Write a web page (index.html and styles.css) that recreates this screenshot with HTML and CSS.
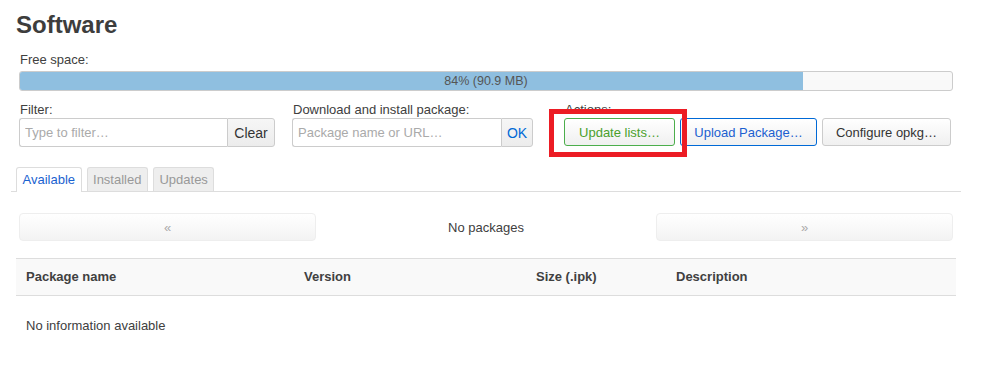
FILE: index.html
```html
<!DOCTYPE html>
<html>
<head>
<meta charset="utf-8">
<link rel="stylesheet" href="styles.css">
</head>
<body>
<div class="page">
  <h2 class="title">Software</h2>

  <div class="label free-label">Free space:</div>
  <div class="progress">
    <div class="progress-fill" style="width:84%"></div>
    <div class="progress-text">84% (90.9 MB)</div>
  </div>

  <div class="controls">
    <div class="group group-filter">
      <div class="label">Filter:</div>
      <div class="input-group">
        <input class="field field-filter" type="text" placeholder="Type to filter…">
        <button class="addon addon-clear">Clear</button>
      </div>
    </div>
    <div class="group group-download">
      <div class="label">Download and install package:</div>
      <div class="input-group">
        <input class="field field-download" type="text" placeholder="Package name or URL…">
        <button class="addon addon-ok">OK</button>
      </div>
    </div>
    <div class="group group-actions">
      <div class="label">Actions:</div>
      <div class="actions">
        <button class="btn btn-green">Update lists…</button>
        <button class="btn btn-blue">Upload Package…</button>
        <button class="btn btn-gray">Configure opkg…</button>
      </div>
    </div>
  </div>

  <ul class="tabs">
    <li class="tab tab-active">Available</li>
    <li class="tab">Installed</li>
    <li class="tab">Updates</li>
  </ul>

  <div class="pager">
    <button class="pager-btn">«</button>
    <div class="pager-text">No packages</div>
    <button class="pager-btn">»</button>
  </div>

  <div class="table">
    <div class="thead">
      <div class="th th-name">Package name</div>
      <div class="th th-version">Version</div>
      <div class="th th-size">Size (.ipk)</div>
      <div class="th th-desc">Description</div>
    </div>
    <div class="empty">No information available</div>
  </div>

  <div class="highlight"></div>
</div>
</body>
</html>
```

FILE: styles.css
```css
* {
  box-sizing: border-box;
}

html, body {
  margin: 0;
  padding: 0;
  background: #fff;
}

body {
  font-family: "Liberation Sans", Arial, sans-serif;
  font-size: 13px;
  color: #404040;
}

.page {
  position: relative;
  width: 981px;
  height: 369px;
  padding: 11px 25px 0 16px;
}

.title {
  margin: 0;
  font-size: 24px;
  line-height: 28px;
  font-weight: bold;
  color: #3d3d3d;
}

.label {
  line-height: 15px;
  height: 15px;
  color: #404040;
  padding-left: 1px;
  white-space: nowrap;
}

.free-label {
  margin: 13px 3px 0 3px;
}

.progress {
  position: relative;
  margin: 4px 3px 0 3px;
  height: 20px;
  border: 1px solid #ccc;
  border-radius: 3px;
  background: #f9f9f9;
  overflow: hidden;
}

.progress-fill {
  height: 100%;
  background: #8fbfe0;
}

.progress-text {
  position: absolute;
  left: 0;
  right: 0;
  top: 0;
  line-height: 18px;
  text-align: center;
  color: #555;
  font-size: 12.5px;
}

.controls {
  display: flex;
  margin-top: 11px;
  padding-left: 3px;
}

.group-download {
  margin-left: 17px;
}

.group-actions {
  margin-left: 31px;
}

.input-group {
  display: flex;
  margin-top: 1px;
}

.field {
  height: 29px;
  border: 1px solid #ccc;
  border-right: none;
  border-radius: 3px 0 0 3px;
  padding: 0 5px;
  font-family: "Liberation Sans", Arial, sans-serif;
  font-size: 13px;
  color: #404040;
  background: #fff;
  outline: none;
}

.field::placeholder {
  color: #aaa;
}

.field-filter {
  width: 208px;
}

.field-download {
  width: 209px;
}

.addon {
  height: 29px;
  border: 1px solid #ccc;
  border-radius: 0 3px 3px 0;
  background: linear-gradient(#f6f6f6, #ececec);
  font-family: "Liberation Sans", Arial, sans-serif;
  font-size: 14px;
  color: #333;
  padding: 0;
}

.addon-clear {
  width: 48px;
}

.addon-ok {
  width: 32px;
  color: #0069d6;
}

.actions {
  display: flex;
  gap: 5px;
  margin-top: 1px;
}

.btn {
  height: 28px;
  border: 1px solid #ccc;
  border-radius: 3px;
  background: linear-gradient(#ffffff, #f0f0f0);
  font-family: "Liberation Sans", Arial, sans-serif;
  font-size: 13px;
  padding: 0;
  white-space: nowrap;
  color: #333;
}

.btn-green {
  width: 111px;
  border-color: #4cae4c;
  color: #4aa02c;
}

.btn-blue {
  width: 137px;
  border-color: #0069d6;
  color: #1c5fd0;
}

.btn-gray {
  width: 129px;
  color: #333;
}

.tabs {
  list-style: none;
  display: flex;
  gap: 5px;
  margin: 20px -5px 0 -5px;
  padding: 0 0 0 5px;
  border-bottom: 1px solid #ddd;
}

.tab {
  height: 24px;
  line-height: 24px;
  padding: 0 5.5px;
  border: 1px solid #ddd;
  border-bottom: none;
  border-radius: 3px 3px 0 0;
  background: #eee;
  color: #999;
}

.tab-active {
  background: #fff;
  color: #1a62d0;
  height: 25px;
  margin-bottom: -1px;
}

.pager {
  display: grid;
  grid-template-columns: 297px 1fr 297px;
  align-items: center;
  margin: 21px 3px 0 3px;
}

.pager-btn {
  height: 28px;
  border: 1px solid #eee;
  border-radius: 4px;
  background: linear-gradient(#ffffff, #f3f3f3);
  color: #aaa;
  font-family: "Liberation Sans", Arial, sans-serif;
  font-size: 13px;
  padding: 0;
}

.pager-text {
  text-align: center;
  color: #404040;
}

.table {
  margin-top: 17px;
}

.thead {
  display: grid;
  grid-template-columns: 278px 232px 140px 1fr;
  height: 38px;
  align-items: center;
  padding-bottom: 1px;
  background: #f9f9f9;
  border-top: 1px solid #ddd;
  border-bottom: 1px solid #ddd;
}

.th {
  padding-left: 10px;
  font-weight: bold;
  color: #404040;
}

.empty {
  padding: 22px 0 0 10px;
  line-height: 15px;
  color: #404040;
}

.highlight {
  position: absolute;
  left: 549px;
  top: 109px;
  width: 138px;
  height: 48px;
  border: 5px solid #ec1c24;
  pointer-events: none;
}
```
